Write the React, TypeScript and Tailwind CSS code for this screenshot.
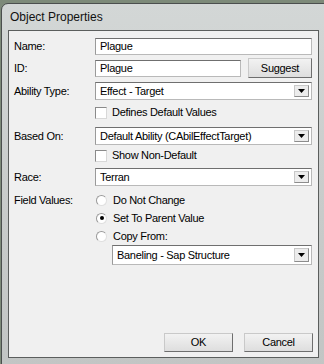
import React from "react";

const Field = ({ value, className = "" }: { value: string; className?: string }) => (
  <div
    className={`h-[17px] bg-white border border-[#b9b9b9] border-t-[#6f6f6f] border-l-[#9a9a9a] flex items-center pl-[4px] ${className}`}>
    {value}
  </div>
);

const Combo = ({ value, className = "", h = "h-[18px]" }: { value: string; className?: string; h?: string }) => (
  <div
    className={`${h} bg-white border border-[#b9b9b9] border-t-[#6f6f6f] border-l-[#9a9a9a] flex items-center ${className}`}>
    <span className="flex-1 pl-[4px]">{value}</span>
    <div className="w-[15px] h-[calc(100%-4px)] mr-[2px] bg-[#ececec] border border-[#c8c8c8] border-r-[#8c8c8c] border-b-[#8c8c8c] flex items-center justify-center">
      <svg width="7" height="4" viewBox="0 0 7 4">
        <path d="M0 0h7L3.5 4z" fill="#000" />
      </svg>
    </div>
  </div>
);

const Btn = ({ label, className = "" }: { label: string; className?: string }) => (
  <div
    className={`bg-gradient-to-b from-[#f2f2f2] to-[#dedede] border border-[#c9c9c9] border-r-[#6e6e6e] border-b-[#6e6e6e] flex items-center justify-center ${className}`}>
    {label}
  </div>
);

const Check = ({ label }: { label: string }) => (
  <div className="h-[13px] flex items-center pl-[86px]">
    <div className="w-[12px] h-[12px] bg-white border border-[#8a8a8a] border-r-[#d8d8d8] border-b-[#d8d8d8]" />
    <span className="ml-[5px]">{label}</span>
  </div>
);

const Radio = ({ checked, label }: { checked?: boolean; label: string }) => (
  <div className="flex items-center">
    <div className="w-[11px] h-[11px] rounded-full bg-white border border-[#9a9a9a] border-r-[#e0e0e0] border-b-[#e0e0e0] flex items-center justify-center">
      {checked && <div className="w-[4px] h-[4px] rounded-full bg-black" />}
    </div>
    <span className="ml-[6px]">{label}</span>
  </div>
);

export default function App() {
  return (
    <div className="w-[324px] h-[364px] overflow-hidden bg-[#7d8a79] pt-[3px] pl-[1px] font-['Liberation_Sans',Arial,sans-serif] text-[11px] tracking-[-0.3px] text-black">
      <div className="w-[330px] h-[370px] rounded-t-[7px] border border-[#4b4f4e] bg-gradient-to-b from-[#d3d7d6] via-[#c9cccb] to-[#c2c5c4] flex flex-col pl-[6px] pr-[5px]">
        <div className="h-[26px] flex items-center pl-[2px] text-[12px] tracking-normal text-[#111]">
          Object Properties
        </div>
        <div className="w-[311px] h-[328px] border border-[#5b5e5d] bg-[#f0f0f0] flex flex-col pr-[6px]">
          <div className="mt-[7px] flex items-center">
            <span className="w-[86px] pl-[5px]">Name:</span>
            <Field value="Plague" className="flex-1" />
          </div>
          <div className="mt-[3px] h-[20px] flex items-center">
            <span className="w-[86px] pl-[5px]">ID:</span>
            <Field value="Plague" className="w-[146px]" />
            <Btn label="Suggest" className="ml-[7px] w-[64px] h-[20px]" />
          </div>
          <div className="mt-[4px] flex items-center">
            <span className="w-[86px] pl-[5px]">Ability Type:</span>
            <Combo value="Effect - Target" className="flex-1" />
          </div>
          <div className="mt-[6px]">
            <Check label="Defines Default Values" />
          </div>
          <div className="mt-[8px] flex items-center">
            <span className="w-[86px] pl-[5px]">Based On:</span>
            <Combo value="Default Ability (CAbilEffectTarget)" className="flex-1" />
          </div>
          <div className="mt-[4px]">
            <Check label="Show Non-Default" />
          </div>
          <div className="mt-[6px] flex items-center">
            <span className="w-[86px] pl-[5px]">Race:</span>
            <Combo value="Terran" className="flex-1" />
          </div>
          <div className="mt-[5px] flex">
            <span className="w-[86px] pl-[5px] h-[18px] flex items-center">Field Values:</span>
            <div className="flex flex-col">
              <div className="h-[18px] flex items-center pl-[1px]">
                <Radio label="Do Not Change" />
              </div>
              <div className="h-[18px] flex items-center pl-[1px]">
                <Radio checked label="Set To Parent Value" />
              </div>
              <div className="h-[18px] flex items-center pl-[1px]">
                <Radio label="Copy From:" />
              </div>
            </div>
          </div>
          <div className="ml-[103px]">
            <Combo value="Baneling - Sap Structure" h="h-[20px]" />
          </div>
          <div className="flex-1" />
          <div className="mb-[5px] flex justify-end gap-[11px] mr-[-1px]">
            <Btn label="OK" className="w-[69px] h-[19px]" />
            <Btn label="Cancel" className="w-[69px] h-[19px]" />
          </div>
        </div>
      </div>
    </div>
  );
}
